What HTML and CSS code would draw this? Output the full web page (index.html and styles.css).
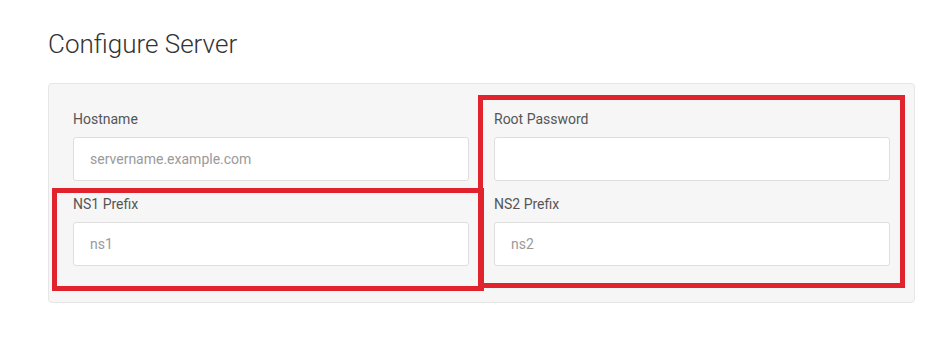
FILE: index.html
```html
<!DOCTYPE html>
<html lang="en">
<head>
  <meta charset="UTF-8" />
  <title>Configure Server</title>
  <link rel="stylesheet" href="styles.css">
</head>
<body>
  <div class="page">
    <h1 class="title">Configure Server</h1>

    <div class="card">
      <div class="grid">
        <div class="field">
          <label class="label">Hostname</label>
          <input class="input" type="text" placeholder="servername.example.com" />
        </div>
        <div class="field">
          <label class="label">Root Password</label>
          <input class="input" type="password" />
        </div>
        <div class="field">
          <label class="label">NS1 Prefix</label>
          <input class="input" type="text" placeholder="ns1" />
        </div>
        <div class="field">
          <label class="label">NS2 Prefix</label>
          <input class="input" type="text" placeholder="ns2" />
        </div>
      </div>

      <!-- annotation boxes drawn over the form -->
      <div class="mark mark-left"></div>
      <div class="mark mark-right"></div>
    </div>
  </div>
</body>
</html>
```

FILE: styles.css
```css
body {
  margin: 0;
  background: #fff;
  font-family: Roboto, 'Liberation Sans', sans-serif;
  color: #333;
  -webkit-font-smoothing: antialiased;
}
.page {
  padding: 27px 24px 0 48px;
}
.title {
  margin: 0 0 22px;
  font-size: 26px;
  font-weight: 300;
  line-height: 34px;
  color: #333;
}
.card {
  position: relative;
  width: 867px;
  padding: 25px 24px 23px;
  box-sizing: border-box;
  background: #f6f6f6;
  border: 1px solid #e6e6e6;
  border-radius: 4px;
}
.grid {
  display: grid;
  grid-template-columns: 1fr 1fr;
  column-gap: 25px;
}
.field {
  display: flex;
  flex-direction: column;
  margin-bottom: 13px;
}
.label {
  font-size: 14px;
  line-height: 20px;
  color: #555;
  margin-bottom: 8px;
}
.input {
  height: 44px;
  box-sizing: border-box;
  padding: 0 16px;
  border: 1px solid #dedede;
  border-radius: 3px;
  background: #fff;
  font-family: Roboto, 'Liberation Sans', sans-serif;
  font-size: 14px;
  color: #333;
  outline: none;
}
.input::placeholder {
  color: #9a9a9a;
}
.mark {
  position: absolute;
  border: 5px solid #e0232c;
  box-sizing: border-box;
}
.mark-left {
  left: 3px;
  top: 104px;
  width: 432px;
  height: 103px;
}
.mark-right {
  left: 429px;
  top: 11px;
  width: 427px;
  height: 193px;
}
```
